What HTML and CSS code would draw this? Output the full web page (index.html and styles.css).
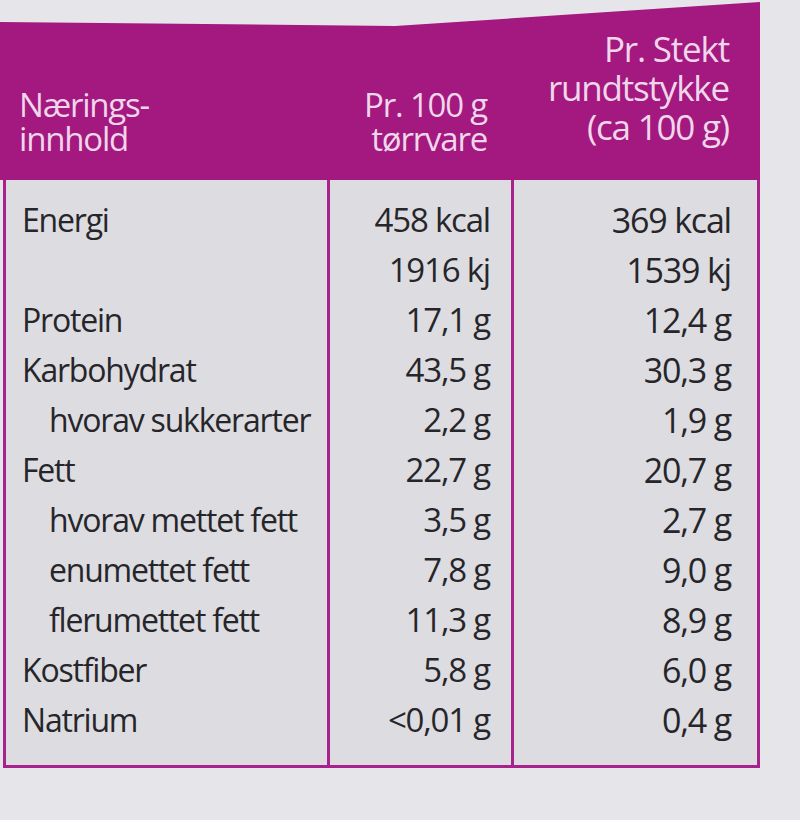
FILE: index.html
```html
<!DOCTYPE html>
<html lang="no">
<head>
<meta charset="utf-8">
<title>Næringsinnhold</title>
<link rel="stylesheet" href="styles.css">
</head>
<body>
<div class="label">
  <div class="head">
    <div class="hc h1"><span>Nærings-</span><span>innhold</span></div>
    <div class="hc h2"><span>Pr. 100 g</span><span>tørrvare</span></div>
    <div class="hc h3"><span>Pr. Stekt</span><span>rundtstykke</span><span>(ca 100 g)</span></div>
  </div>
  <div class="body">
    <div class="col c1">
      <div class="row">Energi</div>
      <div class="row"></div>
      <div class="row">Protein</div>
      <div class="row">Karbohydrat</div>
      <div class="row sub">hvorav sukkerarter</div>
      <div class="row">Fett</div>
      <div class="row sub">hvorav mettet fett</div>
      <div class="row sub">enumettet fett</div>
      <div class="row sub">flerumettet fett</div>
      <div class="row">Kostfiber</div>
      <div class="row">Natrium</div>
    </div>
    <div class="col c2">
      <div class="row">458 kcal</div>
      <div class="row">1916 kj</div>
      <div class="row">17,1 g</div>
      <div class="row">43,5 g</div>
      <div class="row">2,2 g</div>
      <div class="row">22,7 g</div>
      <div class="row">3,5 g</div>
      <div class="row">7,8 g</div>
      <div class="row">11,3 g</div>
      <div class="row">5,8 g</div>
      <div class="row">&lt;0,01 g</div>
    </div>
    <div class="col c3">
      <div class="row">369 kcal</div>
      <div class="row">1539 kj</div>
      <div class="row">12,4 g</div>
      <div class="row">30,3 g</div>
      <div class="row">1,9 g</div>
      <div class="row">20,7 g</div>
      <div class="row">2,7 g</div>
      <div class="row">9,0 g</div>
      <div class="row">8,9 g</div>
      <div class="row">6,0 g</div>
      <div class="row">0,4 g</div>
    </div>
  </div>
</div>
</body>
</html>
```
FILE: styles.css
```css
html, body {
  margin: 0;
  padding: 0;
}
body {
  width: 800px;
  height: 820px;
  overflow: hidden;
  background: #e6e6ea;
  font-family: "Open Sans", "Noto Sans", "DejaVu Sans", sans-serif;
  color: #26262a;
}
.label {
  width: 760px;
  padding-top: 2px;
}
.head {
  display: grid;
  grid-template-columns: 330px 184px 246px;
  height: 178px;
  background: #a3197f;
  clip-path: polygon(0 20px, 52% 24px, 100% 0, 100% 100%, 0 100%);
  color: #f0d6ea;
  font-size: 33px;
  letter-spacing: -1.2px;
  font-weight: 500;
}
.hc {
  display: flex;
  flex-direction: column;
  justify-content: flex-end;
}
.hc span {
  display: block;
  height: 34px;
  line-height: 34px;
  white-space: nowrap;
}
.h1 {
  padding: 0 0 24px 19px;
}
.h2 {
  align-items: flex-end;
  padding: 0 27px 24px 0;
}
.h3 {
  align-items: flex-end;
  padding: 0 31px 34px 0;
  font-size: 35px;
}
.h3 span {
  height: 39px;
  line-height: 39px;
}
.body {
  display: grid;
  grid-template-columns: 324px 184px 1fr;
  margin-left: 3px;
  width: 751px;
  border: 3px solid #a8228e;
  border-top: 0;
  background: #dddce1;
  font-size: 32px;
  letter-spacing: -1.2px;
}
.col {
  display: flex;
  flex-direction: column;
  padding: 15px 0 20px;
}
.c1, .c2 {
  border-right: 3px solid #a8228e;
}
.row {
  height: 50px;
  line-height: 50px;
  white-space: nowrap;
}
.c1 .row {
  padding-left: 16px;
}
.c1 .sub {
  padding-left: 43px;
}
.c2 {
  font-size: 33px;
}
.c2 .row {
  text-align: right;
  padding-right: 21px;
}
.c3 {
  font-size: 34px;
}
.c3 .row {
  text-align: right;
  padding-right: 26px;
}
```
